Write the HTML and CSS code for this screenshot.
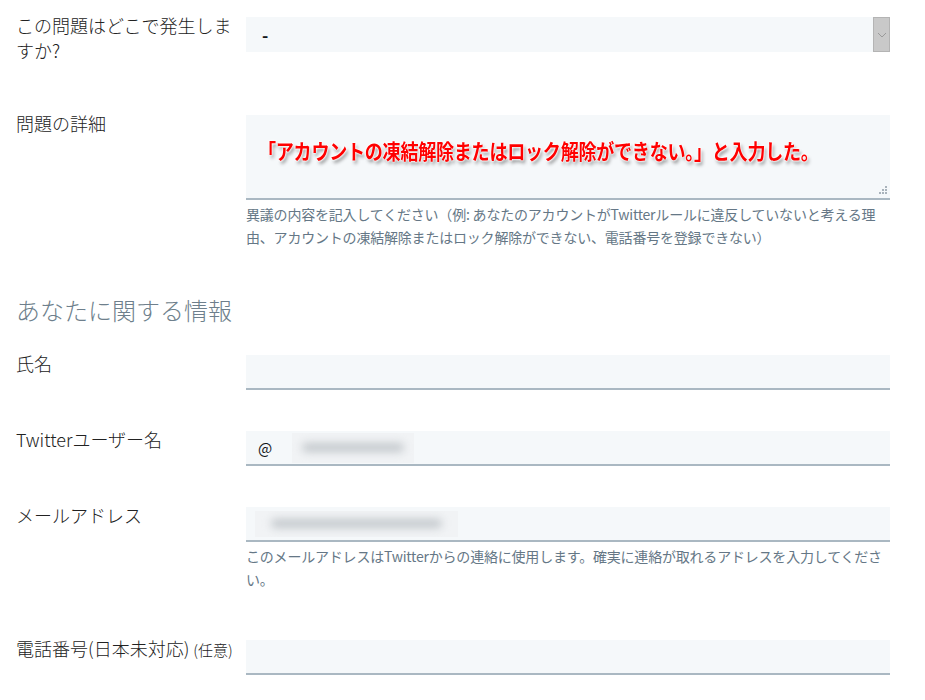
FILE: index.html
```html
<!DOCTYPE html>
<html lang="ja">
<head>
  <meta charset="UTF-8" />
  <title>異議申し立て</title>
  <link rel="stylesheet" href="styles.css">
</head>
<body>

  <form class="form">

    <!-- Where -->
    <div class="row row-select">
      <label class="label">この問題はどこで発生しますか?</label>
      <div class="field">
        <div class="select">
          <span class="select-value">-</span>
          <span class="select-arrow">
            <svg width="10" height="6" viewBox="0 0 10 6"><path d="M1 1 L5 5 L9 1" fill="none" stroke="#9a9a9a" stroke-width="1"/></svg>
          </span>
        </div>
      </div>
    </div>

    <!-- Details -->
    <div class="row row-detail">
      <label class="label">問題の詳細</label>
      <div class="field">
        <div class="textarea">
          <span class="note">「アカウントの凍結解除またはロック解除ができない。」と入力した。</span>
          <svg class="grip" width="9" height="9" viewBox="0 0 9 9">
            <rect x="6" y="0" width="2" height="2" fill="#a9b3bb"/>
            <rect x="3" y="3" width="2" height="2" fill="#a9b3bb"/>
            <rect x="6" y="3" width="2" height="2" fill="#a9b3bb"/>
            <rect x="0" y="6" width="2" height="2" fill="#a9b3bb"/>
            <rect x="3" y="6" width="2" height="2" fill="#a9b3bb"/>
            <rect x="6" y="6" width="2" height="2" fill="#a9b3bb"/>
          </svg>
        </div>
        <p class="help">異議の内容を記入してください（例: あなたのアカウントがTwitterルールに違反していないと考える理由、アカウントの凍結解除またはロック解除ができない、電話番号を登録できない）</p>
      </div>
    </div>

    <h2 class="section-title">あなたに関する情報</h2>

    <!-- Name -->
    <div class="row">
      <label class="label">氏名</label>
      <div class="field">
        <div class="input"></div>
      </div>
    </div>

    <!-- Username -->
    <div class="row">
      <label class="label">Twitterユーザー名</label>
      <div class="field">
        <div class="input input-user">
          <span class="at">@</span>
          <span class="blur blur-user"><span class="blur-ink"></span></span>
        </div>
      </div>
    </div>

    <!-- Email -->
    <div class="row row-email">
      <label class="label">メールアドレス</label>
      <div class="field">
        <div class="input input-mail">
          <span class="blur blur-mail"><span class="blur-ink"></span></span>
        </div>
        <p class="help">このメールアドレスはTwitterからの連絡に使用します。確実に連絡が取れるアドレスを入力してください。</p>
      </div>
    </div>

    <!-- Phone -->
    <div class="row">
      <label class="label">電話番号(日本未対応) <small class="optional">(任意)</small></label>
      <div class="field">
        <div class="input"></div>
      </div>
    </div>

  </form>

</body>
</html>
```

FILE: styles.css
```css
body {
  margin: 0;
  background-color: #fff;
  color: #14171a;
  font-family: "Noto Sans CJK JP", "Noto Sans", sans-serif;
}

.form {
  padding: 13px 0 0 16px;
  width: 874px;
}

.row {
  display: flex;
  align-items: flex-start;
  margin-bottom: 37px;
}

.row-select {
  margin-bottom: 48px;
}

.row-detail {
  margin-bottom: 46px;
}

.row-email {
  margin-bottom: 45px;
}

.label {
  width: 225px;
  padding-right: 5px;
  flex-shrink: 0;
  font-size: 18px;
  font-weight: 300;
  line-height: 25px;
  color: #222;
}

.optional {
  font-size: 15px;
}

.field {
  width: 644px;
  margin-top: 4px;
}

/* select */
.select {
  display: flex;
  align-items: center;
  height: 35px;
  background-color: #f5f8fa;
}

.select-value {
  flex: 1;
  padding-left: 16px;
  font-size: 17px;
  font-weight: bold;
}

.select-arrow {
  display: flex;
  align-items: center;
  justify-content: center;
  width: 15px;
  height: 33px;
  background-color: #c9c9c9;
  border: 1px solid #b4b4b4;
}

/* textarea */
.textarea {
  position: relative;
  height: 60px;
  padding: 23px 0 0 12px;
  background-color: #f5f8fa;
  border-bottom: 2px solid #aab8c2;
}

.note {
  display: inline-block;
  font-size: 21px;
  line-height: 24px;
  font-weight: bold;
  color: #f00;
  letter-spacing: -0.3px;
  transform: scaleX(0.86);
  transform-origin: left center;
  white-space: nowrap;
  text-shadow: 0 0 2px #fff, 0 0 2px #fff, 0 0 3px #fff, 2px 3px 4px rgba(0, 0, 0, 0.45);
}

.grip {
  position: absolute;
  right: 2px;
  bottom: 3px;
}

.help {
  margin: 3px 0 0;
  font-size: 14px;
  line-height: 23px;
  letter-spacing: -0.2px;
  color: #657786;
}

/* section */
.section-title {
  margin: 0 0 26px;
  font-size: 24px;
  line-height: 30px;
  font-weight: 300;
  color: #6e7f8c;
}

/* inputs */
.input {
  display: flex;
  align-items: center;
  height: 33px;
  background-color: #f5f8fa;
  border-bottom: 2px solid #aab8c2;
}

.at {
  width: 46px;
  padding-left: 12px;
  box-sizing: border-box;
  font-size: 15px;
  color: #14171a;
}

.blur {
  display: flex;
  align-items: center;
  justify-content: center;
  height: 30px;
  background-color: #f1f3f5;
  overflow: hidden;
}

.blur-user {
  width: 122px;
}

.input-mail {
  padding-left: 9px;
}

.blur-mail {
  width: 203px;
  height: 26px;
}

.blur-ink {
  display: block;
  width: 84%;
  height: 9px;
  border-radius: 6px;
  background-color: #c3c8cc;
  filter: blur(4px);
}
```
